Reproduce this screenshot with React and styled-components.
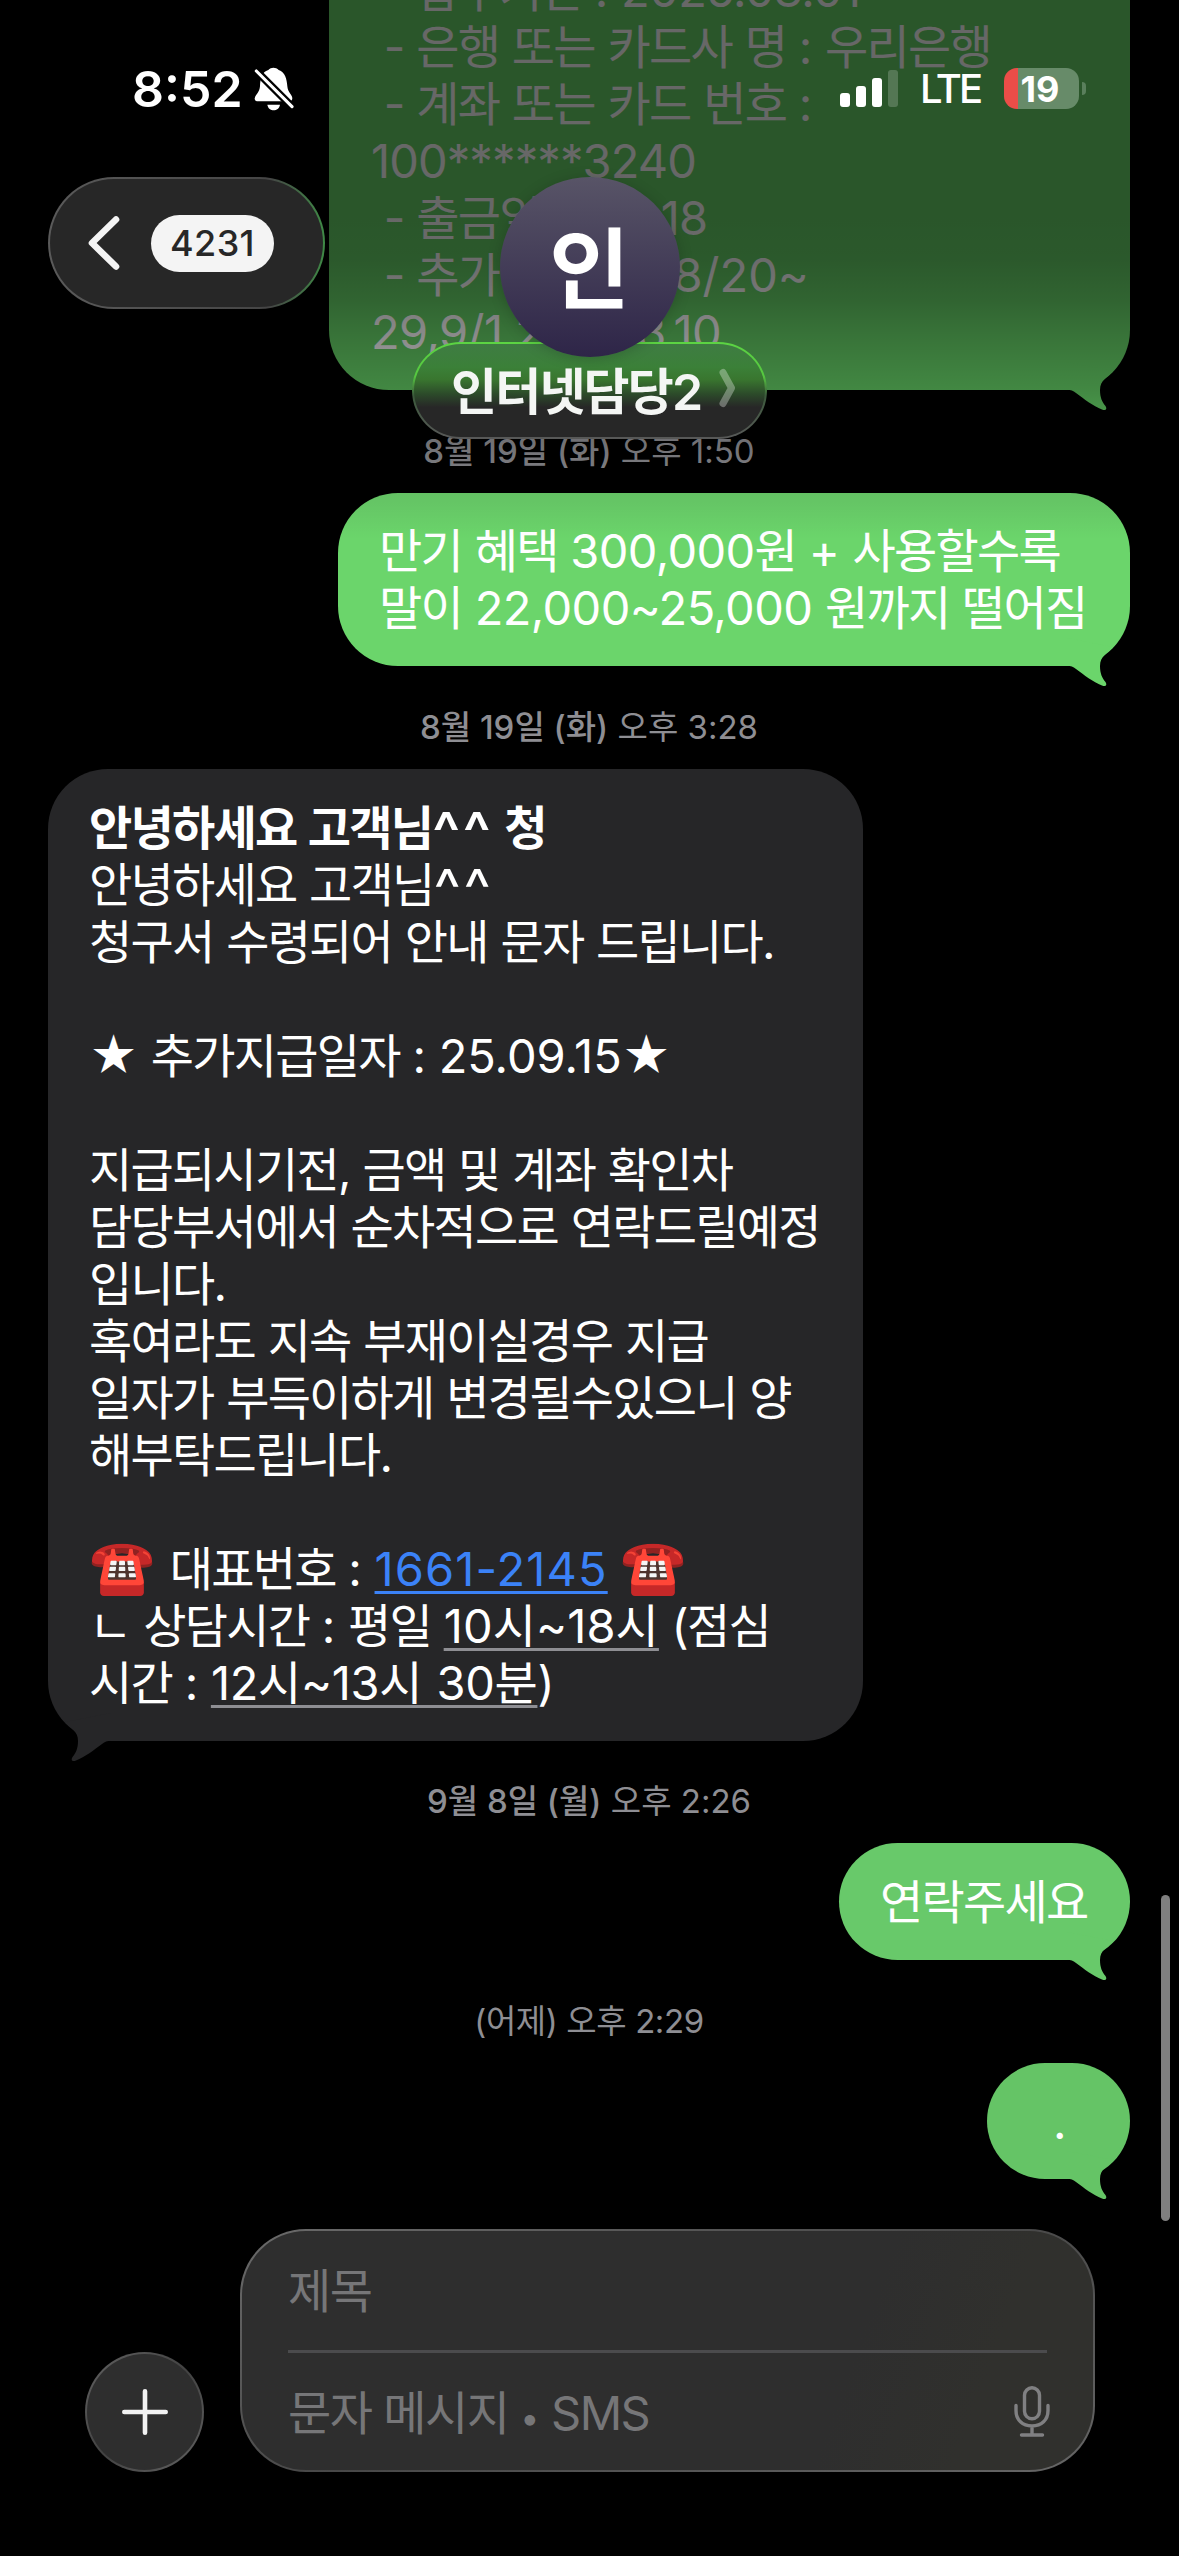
import React from 'react';
import styled, { createGlobalStyle } from 'styled-components';

const GlobalStyle = createGlobalStyle`
  * {
    box-sizing: border-box;
  }
  body {
    margin: 0;
    background: #000;
    font-family: Inter, "Noto Sans CJK KR", sans-serif;
  }
`;

const Screen = styled.div`
  position: relative;
  width: 1179px;
  height: 2556px;
  display: flex;
  flex-direction: column;
  overflow: hidden;
  background: #000;
  color: #fff;
`;

/* thread */

const Thread = styled.main`
  flex: none;
  height: 2229px;
  padding: 0 49px 0 48px;
  display: flex;
  flex-direction: column;
  overflow: hidden;
`;

const Bubble = styled.div`
  position: relative;
  flex: none;
  width: ${p => p.$width}px;
  margin-top: ${p => p.$top || 0}px;
  padding: 29.8px 0 29.8px ${p => p.$indent || 41}px;
  align-self: ${p => (p.$mine ? 'flex-end' : 'flex-start')};
  border-radius: 60px;
  background: ${p => p.$color};
`;

const TailSvg = styled.svg`
  position: absolute;
  bottom: -22px;
  ${p => (p.$mine ? 'right: 0;' : 'left: 0; transform: scaleX(-1);')}
`;

const Line = styled.div`
  height: 57px;
  line-height: 57px;
  font-size: 47px;
  letter-spacing: -1.75px;
  word-spacing: 1.2px;
  white-space: pre;
  font-weight: ${p => (p.$bold ? 600 : 400)};
`;

const Num = styled.span`
  letter-spacing: ${p => p.$ls || 0}px;
`;

const Smile = styled.span`
  font-size: 58px;
  line-height: 0;
  letter-spacing: 2.5px;
  vertical-align: -8px;
`;

const Link = styled.span`
  color: ${p => (p.$phone ? '#3b82f7' : 'inherit')};
  letter-spacing: ${p => p.$ls || 0}px;
  text-decoration: underline;
  text-decoration-color: ${p => (p.$phone ? '#3b82f7' : '#8e8e93')};
  text-decoration-thickness: 3px;
  text-decoration-skip-ink: none;
  text-underline-offset: 5px;
`;

const Emoji = styled.span`
  display: inline-block;
  width: 68px;
  height: 57px;
  line-height: 55px;
  vertical-align: top;
  font-family: "Noto Color Emoji", sans-serif;
  font-size: 53px;
  letter-spacing: 0;
`;

const Stamp = styled.div`
  flex: none;
  height: 102.8px;
  padding-top: 15px;
  display: flex;
  justify-content: center;
  align-items: center;
  font-size: 33px;
  letter-spacing: ${p => p.$ls || 0}px;
  color: #8e8e93;
  white-space: pre;
`;

const Day = styled.span`
  font-weight: 500;
`;

const ScrollBar = styled.div`
  position: absolute;
  right: 9px;
  top: 1895px;
  width: 9px;
  height: 326px;
  border-radius: 5px;
  background: #7f7f7f;
`;

/* header, floats over the thread */

const Header = styled.header`
  position: absolute;
  top: 0;
  left: 0;
  width: 1179px;
  height: 540px;
  background: linear-gradient(
    to bottom,
    rgba(0, 0, 0, 0.595) 215px,
    rgba(0, 0, 0, 0.58) 260px,
    rgba(0, 0, 0, 0.53) 300px,
    rgba(0, 0, 0, 0.46) 335px,
    rgba(0, 0, 0, 0.36) 389px,
    rgba(0, 0, 0, 0.18) 452px,
    rgba(0, 0, 0, 0.07) 493px,
    rgba(0, 0, 0, 0) 540px
  );
`;

const StatusBar = styled.div`
  height: 177px;
  padding: 0 93px 0 132px;
  display: flex;
  align-items: center;
  justify-content: space-between;
`;

const StatusGroup = styled.div`
  display: flex;
  align-items: center;
`;

const Clock = styled.div`
  width: 122px;
  font-size: 50px;
  font-weight: 600;
`;

const Signal = styled.div`
  display: flex;
  align-items: flex-end;
  gap: 6px;
  height: 37px;
`;

const Bar = styled.div`
  width: 10px;
  height: ${p => p.$height}px;
  border-radius: 3px;
  background: ${p => (p.$off ? 'rgba(255, 255, 255, 0.2)' : '#fff')};
`;

const Network = styled.div`
  width: 84px;
  margin-left: 22px;
  font-size: 40px;
  font-weight: 500;
  letter-spacing: -3px;
`;

const Battery = styled.div`
  width: 75px;
  height: 41px;
  padding-right: 3px;
  display: flex;
  align-items: center;
  justify-content: center;
  border-radius: 13px;
  background: linear-gradient(to right, #eb4d48 14px, #678b69 14px);
  font-size: 36px;
  font-weight: 700;
`;

const BatteryNub = styled.div`
  width: 4px;
  height: 13px;
  margin-left: 3px;
  border-radius: 0 4px 4px 0;
  background: #5a7f5c;
`;

const NavBar = styled.nav`
  padding: 0 48px;
  display: grid;
  grid-template-columns: 1fr auto 1fr;
  align-items: start;
`;

const BackButton = styled.div`
  width: 277px;
  height: 132px;
  padding-left: 38px;
  display: flex;
  align-items: center;
  gap: 31px;
  border: 2px solid transparent;
  border-radius: 66px;
  background:
    linear-gradient(#272727, #272727) padding-box,
    linear-gradient(to right, #5a5a5a, #454545 80%, #3f8a46) border-box;
`;

const UnreadBadge = styled.div`
  width: 123px;
  height: 57px;
  display: flex;
  align-items: center;
  justify-content: center;
  border-radius: 29px;
  background: #f4f4f4;
  color: #272727;
  font-size: 36px;
  font-weight: 500;
  letter-spacing: 0.4px;
`;

const Contact = styled.div`
  display: flex;
  flex-direction: column;
  align-items: center;
`;

const Avatar = styled.div`
  position: relative;
  z-index: 1;
  width: 180px;
  height: 180px;
  padding-bottom: 10px;
  display: flex;
  align-items: center;
  justify-content: center;
  border-radius: 50%;
  background: linear-gradient(#585467, #2e2548);
  box-shadow: 0 2px 14px rgba(0, 0, 0, 0.18);
  font-size: 88px;
  font-weight: 700;
`;

const NamePill = styled.div`
  width: 355px;
  height: 97px;
  margin-top: -15px;
  padding: 0 0 5px 37px;
  display: flex;
  align-items: center;
  gap: 18px;
  border: 2px solid transparent;
  border-radius: 49px;
  background:
    linear-gradient(#3f7c43, #3b8038 25%, #39762f 38%, #2c4a2a 54%, #272727 68%) padding-box,
    linear-gradient(#5cd443, #56c840 35%, #3c5a3c 55%, #585858) border-box;
  font-size: 50px;
  font-weight: 600;
  letter-spacing: -1.8px;
  color: #f4f6f4;
  white-space: nowrap;
`;

/* composer */

const Composer = styled.footer`
  height: 243px;
  padding: 0 84px 0 85px;
  display: flex;
  align-items: flex-end;
  justify-content: space-between;
`;

const PlusButton = styled.div`
  width: 119px;
  height: 120px;
  display: flex;
  align-items: center;
  justify-content: center;
  border: 2px solid transparent;
  border-radius: 50%;
  background:
    linear-gradient(#2e2e2e, #2e2e2e) padding-box,
    linear-gradient(135deg, #626262, #424242 50%, #626262) border-box;
`;

const Fields = styled.div`
  width: 855px;
  height: 243px;
  padding: 0 46px;
  display: flex;
  flex-direction: column;
  border: 2px solid transparent;
  border-radius: 66px;
  background:
    linear-gradient(110deg, #2e2e2e 70%, #30302d 85%) padding-box,
    linear-gradient(160deg, #6a6a6a, #484848 50%, #666) border-box;
`;

const Field = styled.div`
  flex: 1;
  padding-bottom: 7px;
  display: flex;
  align-items: center;
  font-size: 47px;
  letter-spacing: -1.5px;
  color: #767678;
  white-space: pre;
  & + & {
    padding-bottom: 5px;
    border-top: 3px solid #4b4b4d;
  }
  svg {
    margin: 5px -3px 0 auto;
  }
`;

const Dot = styled.span`
  font-size: 34px;
  letter-spacing: 0;
`;

const Tail = ({ mine, color }) => (
  <TailSvg $mine={mine} width="66" height="60" viewBox="0 0 66 60">
    <path
      fill={color}
      d="M49 19C43 26 36 28 36 38C36 45 38 50 41.5 54C43.5 57.5 41.5 59 38 57.6C29 54 20 47 12 41C9 39 7 37.8 3 37.8V10Z"
    />
  </TailSvg>
);

const Message = ({ mine, color, tail, children, ...size }) => (
  <Bubble $mine={mine} $color={color} $width={size.width} $top={size.top} $indent={size.indent}>
    <Tail mine={mine} color={tail || color} />
    {children}
  </Bubble>
);

const BellOff = () => (
  <svg width="40" height="44" viewBox="43 34 120 132">
    <path
      fill="#fff"
      d="M45 128C47 118 60 110 61 92C62 70 66 48 86 43C90 38 96 36 101 36C107 36 113 38 117 43C137 50 141 70 143 92C144 110 158 118 158 128C158 134 154 137 150 137H52C48 137 45 134 45 128ZM83 147H121C119 158 111 164 102 164C93 164 85 158 83 147Z"
    />
    <path d="M40 36L166 162" stroke="#000" strokeWidth="23" />
    <path d="M50 46L157 153" stroke="#fff" strokeWidth="9.5" strokeLinecap="round" />
  </svg>
);

const Mic = () => (
  <svg width="36" height="51" viewBox="0 0 36 51" fill="none" stroke="#808082" strokeWidth="3.4" strokeLinecap="round">
    <rect x="10.5" y="1.8" width="15" height="31" rx="7.5" />
    <path d="M2 19.5V24.5C2 34 8.5 40 18 40C27.5 40 34 34 34 24.5V19.5M18 40V48.5M7.5 49H28.5" />
  </svg>
);

const App = () => {
  return <Screen>
    <GlobalStyle />

    <Thread>
      <Message mine width={801} top={-68.8} indent={42} color="#67d468">
        <Line> - 납부기간 <Num>:</Num> <Num $ls={-0.6}>2025.08.01</Num></Line>
        <Line> - 은행 또는 카드사 명 <Num>:</Num> 우리은행</Line>
        <Line> - 계좌 또는 카드 번호 <Num>:</Num></Line>
        <Line><Num $ls={-0.9}>100******3240</Num></Line>
        <Line> - 출금일: 매월 <Num $ls={-1}>18</Num></Line>
        <Line> - 추가 출금일 : <Num>8/20~</Num></Line>
        <Line><Num $ls={-0.6}>29,9/1,2,5, 28,10</Num></Line>
      </Message>

      <Stamp><Day>8월 19일 (화)</Day> 오후 1:50</Stamp>

      <Message mine width={792} color="linear-gradient(#6bd06b, #6bd56b 40px)" tail="#6bd56b">
        <Line>만기 혜택 <Num $ls={-0.6}>300,000</Num>원 <Num>+</Num> 사용할수록</Line>
        <Line>말이 <Num $ls={-0.6}>22,000~25,000</Num> 원까지 떨어짐</Line>
      </Message>

      <Stamp><Day>8월 19일 (화)</Day> 오후 3:28</Stamp>

      <Message width={815} color="#262628">
        <Line $bold>안녕하세요 고객님<Smile>^^</Smile> 청</Line>
        <Line>안녕하세요 고객님<Smile>^^</Smile></Line>
        <Line>청구서 수령되어 안내 문자 드립니다.</Line>
        <Line />
        <Line><Num>★</Num> 추가지급일자 <Num>:</Num> <Num>25.09.15★</Num></Line>
        <Line />
        <Line>지급되시기전, 금액 및 계좌 확인차</Line>
        <Line>담당부서에서 순차적으로 연락드릴예정</Line>
        <Line>입니다.</Line>
        <Line>혹여라도 지속 부재이실경우 지급</Line>
        <Line>일자가 부득이하게 변경될수있으니 양</Line>
        <Line>해부탁드립니다.</Line>
        <Line />
        <Line><Emoji>☎️</Emoji> 대표번호 <Num>:</Num> <Link $phone $ls={1.1}>1661-2145</Link> <Emoji>☎️</Emoji></Line>
        <Line>ㄴ 상담시간 <Num>:</Num> 평일 <Link $ls={0.1}>10시~18시</Link> (점심</Line>
        <Line>시간 <Num>:</Num> <Link $ls={-0.3}>12시~13시 30분</Link>)</Line>
      </Message>

      <Stamp><Day>9월 8일 (월)</Day> 오후 2:26</Stamp>

      <Message mine width={291} color="#68c96a">
        <Line>연락주세요</Line>
      </Message>

      <Stamp $ls={-0.4}>(어제) 오후 2:29</Stamp>

      <Message mine width={143} indent={66} color="#65c466">
        <Line>.</Line>
      </Message>
    </Thread>

    <Composer>
      <PlusButton>
        <svg width="46" height="46" viewBox="0 0 46 46" stroke="#f2f2f2" strokeWidth="4.6" strokeLinecap="round">
          <path d="M23 2.3V43.7M2.3 23H43.7" />
        </svg>
      </PlusButton>
      <Fields>
        <Field>제목</Field>
        <Field><span>문자 메시지 <Dot>•</Dot> SMS</span><Mic /></Field>
      </Fields>
    </Composer>

    <ScrollBar />

    <Header>
      <StatusBar>
        <StatusGroup>
          <Clock>8:52</Clock>
          <BellOff />
        </StatusGroup>
        <StatusGroup>
          <Signal>
            <Bar $height={14} />
            <Bar $height={21} />
            <Bar $height={29} />
            <Bar $height={37} $off />
          </Signal>
          <Network>LTE</Network>
          <Battery>19</Battery>
          <BatteryNub />
        </StatusGroup>
      </StatusBar>
      <NavBar>
        <BackButton>
          <svg width="32" height="56" viewBox="0 0 32 56" fill="none" stroke="#f4f4f4" strokeWidth="6.6" strokeLinecap="round" strokeLinejoin="round">
            <path d="M28 4.5L4 28L28 51.5" />
          </svg>
          <UnreadBadge>4231</UnreadBadge>
        </BackButton>
        <Contact>
          <Avatar>인</Avatar>
          <NamePill>
            인터넷담당2
            <svg width="17" height="40" viewBox="0 0 17 40" fill="none" stroke="rgba(255, 255, 255, 0.32)" strokeWidth="7" strokeLinecap="round" strokeLinejoin="round">
              <path d="M4 4.5L12.5 20L4 35.5" />
            </svg>
          </NamePill>
        </Contact>
      </NavBar>
    </Header>
  </Screen>
}

export default App;
